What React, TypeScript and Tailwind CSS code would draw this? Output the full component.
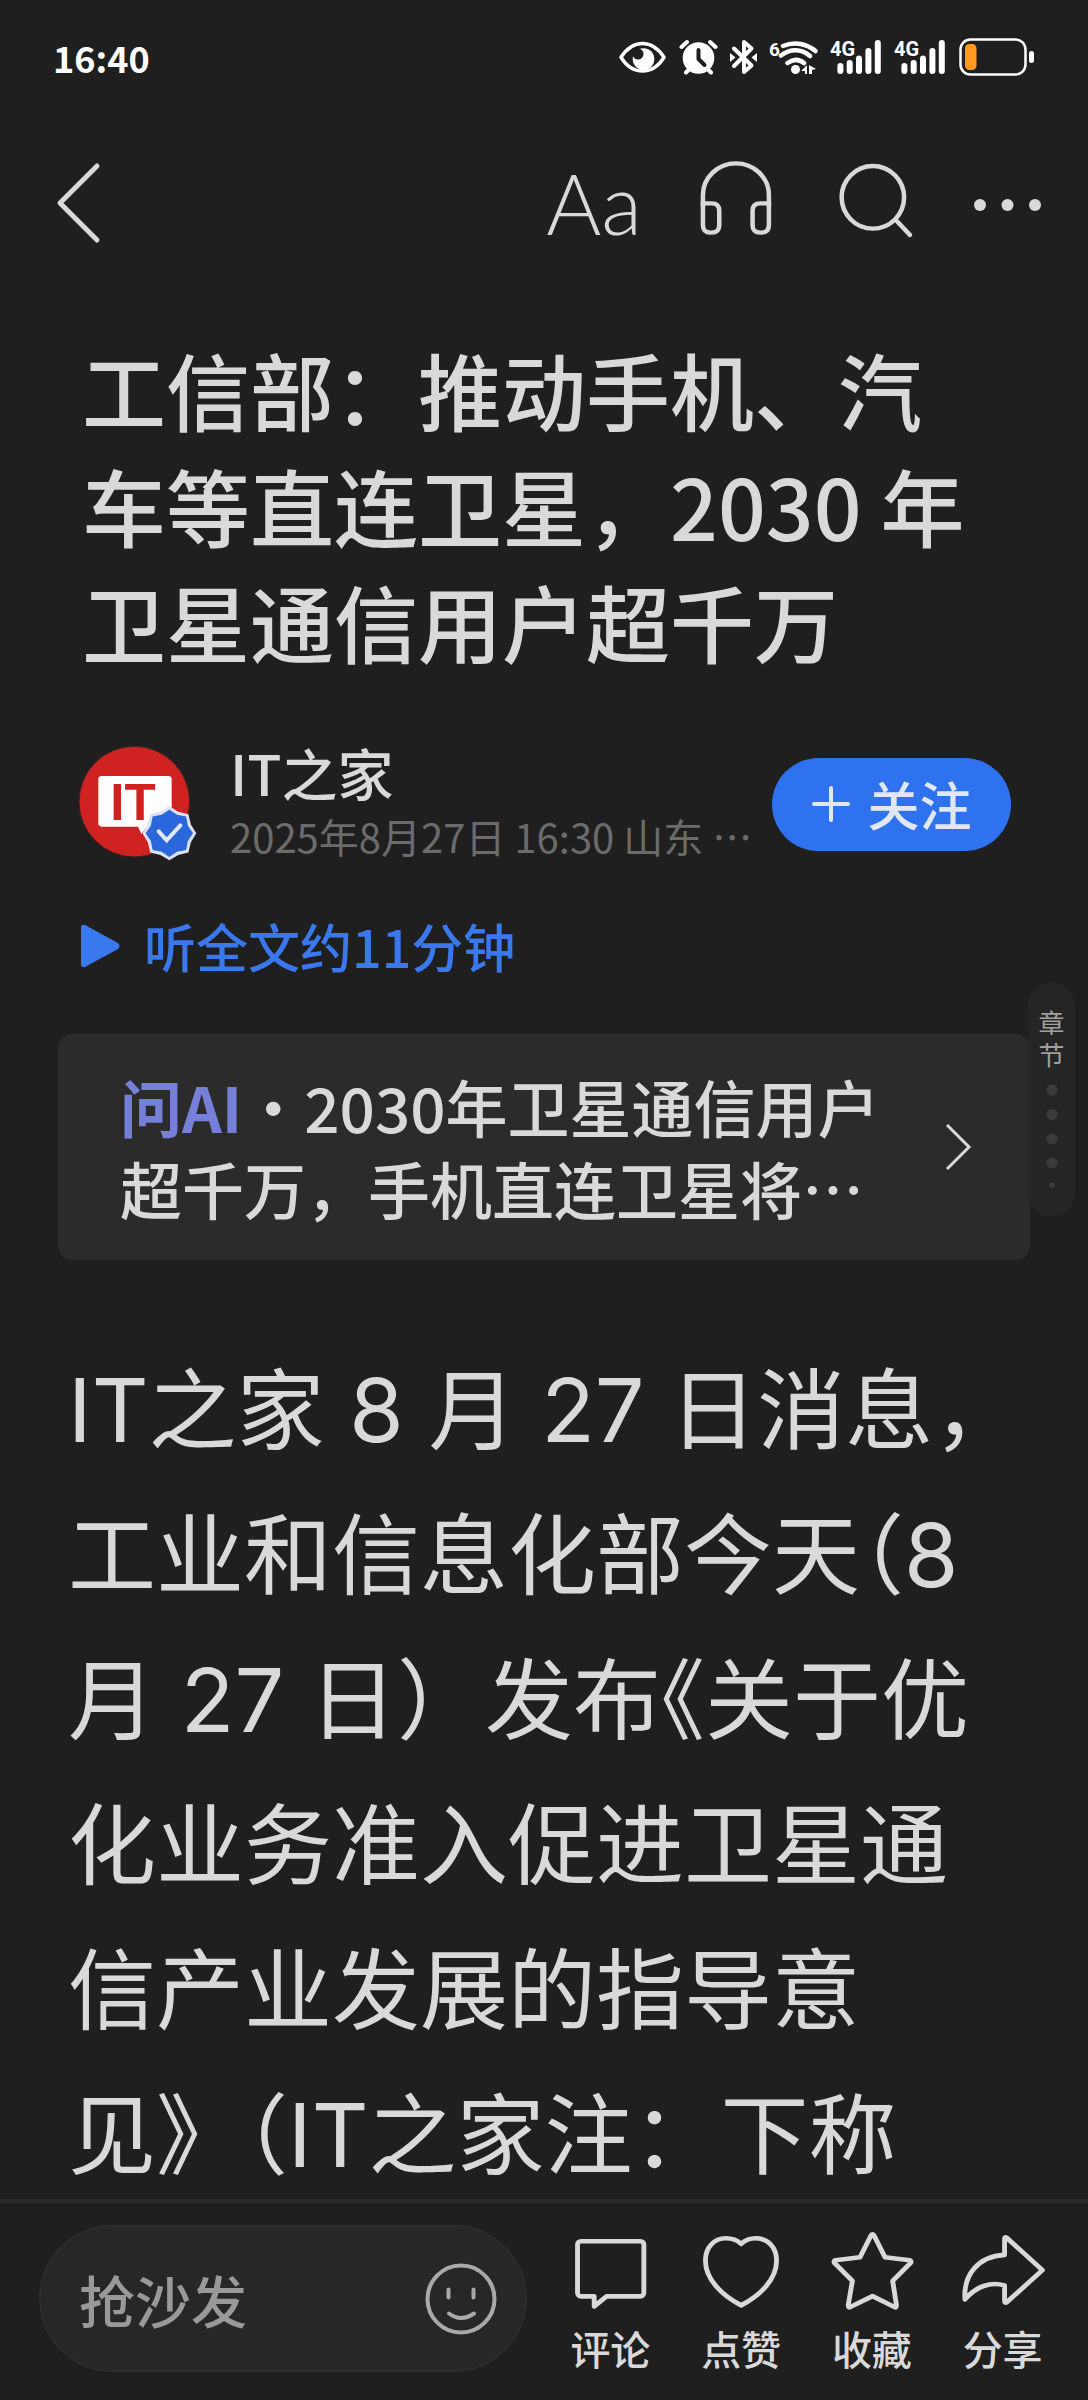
import React, { FunctionComponent, ReactNode, useState } from "react";

type IconProps = {
  children: ReactNode;
};

const badgePoints = (outer: number, inner: number) => {
  const points: string[] = [];
  for (let i = 0; i < 16; i++) {
    const radius = i % 2 === 0 ? outer : inner;
    const angle = (i * Math.PI) / 8;
    points.push(
      `${274 + radius * Math.sin(angle)},${262 - radius * Math.cos(angle)}`
    );
  }
  return points.join(" ");
};

const SignalIcon: FunctionComponent = () => (
  <svg className="h-[38px] w-[52px]" viewBox="0 0 52 38" fill="#fff">
    <text
      x="0"
      y="18"
      fontSize="20"
      fontWeight="700"
      fontFamily="Roboto, sans-serif"
    >
      4G
    </text>
    <rect x="7.4" y="25" width="6" height="11" rx="3" />
    <rect x="16.7" y="22" width="6" height="14" rx="3" />
    <rect x="26" y="17.500" width="6" height="18.500" rx="3" />
    <rect x="35.4" y="10" width="6" height="26" rx="3" />
    <rect x="44.8" y="2" width="6" height="34" rx="3" />
  </svg>
);

const StatusBar: FunctionComponent = () => (
  <div className="flex items-center justify-between pt-[37px] pr-[53px] pl-[53px] text-white">
    <time className="text-4xl leading-10 font-bold">16:40</time>
    <div className="flex items-center gap-3">
      <svg className="h-[38px] w-[50px]" viewBox="0 0 50 38" fill="none">
        <path
          d="M4 19.300C10 10 18 5.500 25.500 5.500S41 10 47 19.300C41 29 33 33 25.500 33S10 29 4 19.300Z"
          stroke="#fff"
          strokeWidth="3.5"
          strokeLinejoin="round"
        />
        <circle cx="26.5" cy="21" r="10.8" fill="#fff" />
        <circle cx="21" cy="16" r="5.5" fill="#1f1f1f" />
      </svg>
      <svg className="h-[38px] w-[39px]" viewBox="0 0 39 38" fill="none">
        <path
          d="M2.500 9L8 4M36.500 9L31 4M7 34.500l5-5M32 34.500l-5-5"
          stroke="#fff"
          strokeWidth="4"
          strokeLinecap="round"
        />
        <circle cx="19.5" cy="20" r="15.8" fill="#fff" />
        <path
          d="M19.500 12v9l6 6"
          stroke="#1f1f1f"
          strokeWidth="4"
          strokeLinecap="round"
          strokeLinejoin="round"
        />
      </svg>
      <svg className="h-[38px] w-[27px]" viewBox="0 0 27 38" fill="none">
        <path
          d="M4 10.500l17.500 17-7.500 6.500V4l7.500 6.500L4 28"
          stroke="#fff"
          strokeWidth="4"
          strokeLinecap="round"
          strokeLinejoin="round"
        />
        <path d="M0 15l5.500 4.500L0 24zM27 15l-5.500 4.500L27 24z" fill="#fff" />
      </svg>
      <svg className="h-[38px] w-[49px]" viewBox="0 0 49 38" fill="none">
        <text
          x="0"
          y="18"
          fontSize="19"
          fontWeight="700"
          fontFamily="Roboto, sans-serif"
          fill="#fff"
        >
          6
        </text>
        <path
          d="M14 8C26 3 38 6 46.500 13M12 17.500C21 10.500 32 10.500 41 18M18.500 25C24 21 30 21 35 25"
          stroke="#fff"
          strokeWidth="4.5"
          strokeLinecap="round"
        />
        <circle cx="26.500" cy="31.500" r="4.500" fill="#fff" />
        <path d="M38 27v9h-2v-3h-4zM40 36v-9l7 4-4 1v4z" fill="#fff" />
      </svg>
      <SignalIcon />
      <SignalIcon />
      <svg className="h-[38px] w-[77px]" viewBox="0 0 77 38" fill="none">
        <rect
          x="2.5"
          y="1.5"
          width="65"
          height="35"
          rx="10"
          stroke="#fff"
          strokeWidth="2.5"
        />
        <rect x="7" y="6" width="11.5" height="26" rx="4.5" fill="#ff9a1f" />
        <rect x="71" y="13" width="5" height="12" rx="2.5" fill="#fff" />
      </svg>
    </div>
  </div>
);

const Toolbar: FunctionComponent = () => (
  <header className="mt-[84px] flex h-[84px] items-center justify-between pr-11 pl-[54px]">
    <button aria-label="返回">
      <svg
        className="h-[84px] w-12"
        viewBox="0 0 48 84"
        fill="none"
        stroke="currentColor"
        strokeWidth="5"
        strokeLinecap="round"
        strokeLinejoin="round"
      >
        <path d="M43 5L6 42l37 37" />
      </svg>
    </button>
    <div className="flex items-center gap-[54px]">
      <button
        aria-label="字体"
        className="font-['Lato','Roboto',sans-serif] text-[84px] leading-[84px] font-light"
      >
        Aa
      </button>
      <button aria-label="听文章">
        <svg
          className="size-[84px]"
          viewBox="0 13 242 252"
          preserveAspectRatio="none"
          fill="none"
          stroke="currentColor"
          strokeWidth="13"
        >
          <path d="M20 150v-35a95 95 0 0 1 190 0v35" />
          <path d="M20 140h25q22 0 22 22v44q0 22-22 22h-3q-22 0-22-22z" />
          <path d="M210 140h-25q-22 0-22 22v44q0 22 22 22h3q22 0 22-22z" />
        </svg>
      </button>
      <button aria-label="搜索">
        <svg
          className="size-[84px]"
          viewBox="0 13 242 252"
          preserveAspectRatio="none"
          fill="none"
          stroke="currentColor"
          strokeWidth="13"
          strokeLinecap="round"
        >
          <ellipse cx="112" cy="122" rx="90" ry="94" />
          <path d="M178 190l41 45" />
        </svg>
      </button>
      <button aria-label="更多">
        <svg className="h-[84px] w-[72px]" viewBox="0 0 72 84" fill="currentColor">
          <circle cx="8" cy="44" r="6" />
          <circle cx="35.5" cy="44" r="6" />
          <circle cx="63" cy="44" r="6" />
        </svg>
      </button>
    </div>
  </header>
);

const Avatar: FunctionComponent = () => (
  <svg className="h-[116px] w-[120px] shrink-0" viewBox="0 0 360 348">
    <circle cx="169" cy="167" r="166" fill="#d02321" stroke="#3a2222" strokeWidth="3" />
    <path
      d="M71 90h200q10 0 10 10v132q0 10-10 10h-65l-16 22-10-22H71q-10 0-10-10V100q0-10 10-10z"
      fill="#fff"
    />
    <text
      x="97"
      y="221"
      fontSize="153"
      fontWeight="700"
      fontFamily="Liberation Sans, sans-serif"
      fill="#d02321"
    >
      IT
    </text>
    <polygon points={badgePoints(81, 70)} fill="#dbe1f0" />
    <polygon points={badgePoints(71, 60)} fill="#2a67dc" />
    <path
      d="M242 256l24 27 41-45"
      fill="none"
      stroke="#e2e8f5"
      strokeWidth="12"
      strokeLinecap="round"
    />
  </svg>
);

const Author: FunctionComponent = () => {
  const [following, setFollowing] = useState(false);

  return (
    <div className="mt-[61px] flex items-center pr-[77px] pl-[78px]">
      <Avatar />
      <div className="ml-8 min-w-0 flex-1">
        <a href="#author" className="block text-[56px] leading-[64px] font-medium">
          IT之家
        </a>
        <p className="text-[40px] leading-[64px] whitespace-nowrap text-[#6b6b6b]">
          2025年8月27日 16:30 山东 …
        </p>
      </div>
      <button
        aria-pressed={following}
        onClick={() => setFollowing(!following)}
        className="flex h-[93px] w-[239px] shrink-0 items-center justify-center gap-4 rounded-full bg-[#2f72f0] text-[52px] leading-[80px] font-medium text-[#e2e8f3]"
      >
        <svg
          className="size-10"
          viewBox="0 0 40 40"
          stroke="currentColor"
          strokeWidth="4"
          strokeLinecap="round"
        >
          <path d="M20 4v32M3 20h34" />
        </svg>
        关注
      </button>
    </div>
  );
};

const Chapters: FunctionComponent = () => (
  <nav
    aria-label="章节"
    className="absolute top-[982px] right-[13px] flex h-[235px] w-[47px] flex-col items-center rounded-full bg-[#252525] pt-6 text-[26px] leading-8 text-[#a0a0a0]"
  >
    <span>章</span>
    <span>节</span>
    <svg className="mt-3 h-[110px] w-3" viewBox="0 0 12 110" fill="#3b3b3b">
      <circle cx="6" cy="8" r="5.5" />
      <circle cx="6" cy="32.5" r="5.5" />
      <circle cx="6" cy="57" r="5.5" />
      <circle cx="6" cy="81" r="5.5" />
      <circle cx="6" cy="103" r="3" />
    </svg>
  </nav>
);

const ActionIcon: FunctionComponent<IconProps> = ({ children }) => (
  <svg
    className="h-[88px] w-[92px]"
    viewBox="0 0 265 265"
    preserveAspectRatio="none"
    fill="none"
    stroke="currentColor"
    strokeWidth="14"
    strokeLinecap="round"
    strokeLinejoin="round"
  >
    {children}
  </svg>
);

const actions = [
  {
    label: "评论",
    d: "M49 43H220a10 10 0 0 1 10 10V199a10 10 0 0 1-10 10H122L87 239V209H49a10 10 0 0 1-10-10V53a10 10 0 0 1 10-10Z",
  },
  {
    label: "点赞",
    d: "M133 51C122 40 106 34 89 34C55 34 30 62 30 101C30 158 78 206 133 236C188 206 235 158 235 101C235 62 210 34 175 34C158 34 144 40 133 51Z",
  },
  {
    label: "收藏",
    d: "M130 25Q134 19 138 25L170 91L241 100Q248 103 243 109L192 162L203 236Q203 244 197 241L134 208L70 241Q64 244 64 236L76 162L25 109Q20 103 27 100L98 91Z",
  },
  {
    label: "分享",
    d: "M137 84V36q0-8 7-3L246 130L144 226q-7 5-7-4V176C97 164 55 178 23 218C18 145 60 88 137 84Z",
  },
];

const BottomBar: FunctionComponent = () => {
  const [comment, setComment] = useState("");

  return (
    <footer className="flex shrink-0 items-start border-t-4 border-[#292929] pt-[22px] pr-5 pb-[27px] pl-[39px]">
      <div className="flex h-[147px] w-[488px] shrink-0 items-center rounded-full border-2 border-[#2c2c2c] bg-[#272727] pr-7 pl-[38px]">
        <input
          type="text"
          aria-label="评论内容"
          placeholder="抢沙发"
          value={comment}
          onChange={(event) => setComment(event.target.value)}
          className="min-w-0 flex-1 bg-transparent text-[56px] leading-[80px] font-medium outline-none placeholder:text-[#999999]"
        />
        <button aria-label="表情" className="text-[#a9a9a9]">
          <svg
            className="size-[72px]"
            viewBox="0 0 72 72"
            fill="none"
            stroke="currentColor"
            strokeWidth="4"
            strokeLinecap="round"
          >
            <circle cx="36" cy="36" r="33.5" />
            <path d="M23.500 26.500v8M48.500 26.500v8M24 50.500q12 9 25 0" />
          </svg>
        </button>
      </div>
      <div className="mt-0.5 ml-[18px] grid flex-1 grid-cols-4">
        {actions.map((action) => (
          <button key={action.label} className="flex flex-col items-center">
            <ActionIcon>
              <path d={action.d} />
            </ActionIcon>
            <span className="mt-2 text-[40px] leading-[50px] font-medium">
              {action.label}
            </span>
          </button>
        ))}
      </div>
    </footer>
  );
};

const App: FunctionComponent = () => {
  return (
    <div className="flex h-screen flex-col bg-[#1f1f1f] font-['Noto_Sans_CJK_SC',sans-serif] text-[#d9d9d9]">
      <main className="relative min-h-0 flex-1 overflow-y-auto [scrollbar-width:none]">
        <StatusBar />
        <Toolbar />

        <h1 className="mt-[86px] pr-[90px] pl-[82px] text-[84px] leading-[116px] font-medium">
          工信部：推动手机、汽车等直连卫星，2030 年卫星通信用户超千万
        </h1>

        <Author />

        <button className="mt-[38px] ml-[78px] flex items-center gap-[22px] text-[52px] leading-[80px] font-medium text-[#3a78ee]">
          <svg className="size-11" viewBox="0 0 44 44" fill="currentColor">
            <path d="M3 4q0-4 4-3l33 18q3 3 0 6L7 43q-4 1-4-3z" />
          </svg>
          听全文约11分钟
        </button>

        <a
          href="#ask-ai"
          className="mx-[58px] mt-12 flex items-center gap-10 rounded-[14px] bg-[#2b2b2b] py-[31px] pr-[58px] pl-[62px]"
        >
          <p className="flex-1 text-[62px] leading-[82px] font-medium">
            <span className="font-bold text-[#7680d8]">问AI</span>
            ·2030年卫星通信用户超千万，手机直连卫星将…
          </p>
          <svg
            className="h-12 w-7 shrink-0"
            viewBox="0 0 28 48"
            fill="none"
            stroke="currentColor"
            strokeWidth="3"
          >
            <path d="M3 2l22 22L3 46" />
          </svg>
        </a>

        <article className="mt-[78px] pr-[56px] pl-[68px] font-['Inter','Noto_Sans_CJK_SC',sans-serif] text-[88px] leading-[145px]">
          <p>
            IT之家 8 月 27 日消息，工业和信息化部今天
            <span className="[font-feature-settings:'halt']">（</span>8 月 27
            日）发布
            <span className="[font-feature-settings:'halt']">《</span>
            关于优化业务准入促进卫星通信产业发展的指导意
            <span className="whitespace-nowrap">见》（IT之家注：</span>下称
          </p>
        </article>

        <Chapters />
      </main>

      <BottomBar />
    </div>
  );
};

export default App;
